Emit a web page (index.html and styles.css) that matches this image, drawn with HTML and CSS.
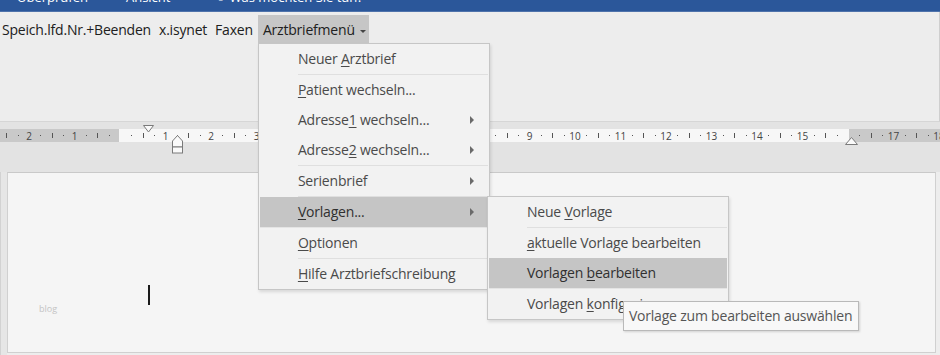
FILE: index.html
```html
<!DOCTYPE html>
<html lang="de">
<head>
    <meta charset="UTF-8">
    <title>Arztbriefmenü</title>
    <link rel="stylesheet" href="styles.css">
</head>
<body>
    <div class="titlebar">
        <div class="tabs">
            <span class="tab">Überprüfen</span>
            <span class="tab">Ansicht</span>
            <span class="tab tell"><span class="bulb">&#9675;</span>Was möchten Sie tun?</span>
        </div>
    </div>

    <div class="ribbon">
        <div class="menubar">
            <span class="menubtn">Speich.lfd.Nr.+Beenden</span>
            <span class="menubtn">x.isynet</span>
            <span class="menubtn">Faxen</span>
            <div class="menubtn open">Arztbriefmenü<span class="caret"></span>
                <ul class="dropdown">
                    <li class="item sep">Neuer <u>A</u>rztbrief</li>
                    <li class="item"><u>P</u>atient wechseln...</li>
                    <li class="item sub">Adresse<u>1</u> wechseln...</li>
                    <li class="item sub sep">Adresse<u>2</u> wechseln...</li>
                    <li class="item sub sep">Serienbrief</li>
                    <li class="item sub active sep"><u>V</u>orlagen...
                        <ul class="dropdown submenu">
                            <li class="item sep">Neue <u>V</u>orlage</li>
                            <li class="item"><u>a</u>ktuelle Vorlage bearbeiten</li>
                            <li class="item active sep">Vorlagen <u>b</u>earbeiten</li>
                            <li class="item">Vorlagen <u>k</u>onfigurieren</li>
                            <div class="tooltip">Vorlage zum bearbeiten auswählen</div>
                        </ul>
                    </li>
                    <li class="item sep"><u>O</u>ptionen</li>
                    <li class="item"><u>H</u>ilfe Arztbriefschreibung</li>
                </ul>
            </div>
        </div>
    </div>

    <div class="ruler-area">
        <svg class="ruler" id="ruler" width="940" height="34"></svg>
    </div>

    <div class="workspace">
        <div class="vstrip"></div>
        <div class="page">
            <div class="line">
                <span class="watermark">blog</span>
                <span class="caret-cursor"></span>
            </div>
        </div>
    </div>

    <script>
        const ruler = document.getElementById('ruler');
        const ns = 'http://www.w3.org/2000/svg';
        const cm = 45.5;
        const zero = 120;

        function add(tag, attrs, text) {
            const el = document.createElementNS(ns, tag);
            for (const k in attrs) el.setAttribute(k, attrs[k]);
            if (text) el.textContent = text;
            ruler.appendChild(el);
            return el;
        }

        // Hintergrund des Lineals (Ränder grau)
        add('rect', { x: 0, y: 7, width: 940, height: 13, fill: '#c9c9c9' });
        add('rect', { x: 119, y: 7, width: 730, height: 13, fill: '#f7f7f7' });

        for (let n = -3; n <= 18; n++) {
            const x = zero + n * cm;
            if (n !== 0 && n !== 16) {
                add('text', { x: x, y: 17.5, class: 'num' }, String(Math.abs(n)));
            }
            add('rect', { x: Math.round(x + cm * 0.25), y: 13, width: 1, height: 1, fill: '#555' });
            add('rect', { x: Math.round(x + cm * 0.5), y: 11, width: 1, height: 5, fill: '#555' });
            add('rect', { x: Math.round(x + cm * 0.75), y: 13, width: 1, height: 1, fill: '#555' });
        }

        // Einzugsmarken
        add('polygon', { points: '143.5,3.5 153.5,3.5 148.5,10', fill: '#fafafa', stroke: '#7a7a7a' });
        add('polygon', { points: '172.5,19 177.5,13.5 182.5,19 182.5,25 172.5,25', fill: '#fafafa', stroke: '#7a7a7a' });
        add('rect', { x: 172.5, y: 25, width: 10, height: 6, fill: '#fafafa', stroke: '#7a7a7a' });
        add('polygon', { points: '845.5,22.5 851.5,15.5 857.5,22.5', fill: '#fafafa', stroke: '#7a7a7a' });
    </script>
</body>
</html>
```

FILE: styles.css
```css
body {
    margin: 0;
    width: 940px;
    height: 355px;
    overflow: hidden;
    background-color: #ededed;
    font-family: 'Open Sans', 'Noto Sans', sans-serif;
    font-size: 14px;
    color: #202020;
}
ul {
    list-style: none;
    margin: 0;
    padding: 0;
}
u {
    text-decoration-thickness: 1px;
    text-underline-offset: 2px;
}

/* blaue Titelleiste, oben abgeschnitten */
.titlebar {
    height: 11px;
    background-color: #2b579a;
    border-bottom: 1px solid #4f73ab;
    overflow: hidden;
}
.tabs {
    display: flex;
    margin-top: -11px;
    padding-left: 17px;
    color: #ffffff;
    font-size: 13px;
    line-height: 16px;
}
.tab {
    margin-right: 38px;
}
.tell {
    margin-left: 9px;
}
.bulb {
    font-size: 10px;
    margin-right: 6px;
}

/* Menüband */
.ribbon {
    height: 109px;
    border-bottom: 1px solid #d6d6d6;
    border-right: 1px solid #cfcfcf;
}
.menubar {
    display: flex;
    padding-top: 3px;
    padding-left: 2px;
}
.menubtn {
    height: 29px;
    line-height: 29px;
    margin-right: 8px;
    letter-spacing: -0.2px;
    position: relative;
}
.menubtn.open {
    background-color: #c6c6c6;
    margin-left: -3px;
    padding: 0 3px 0 5px;
}
.caret {
    display: inline-block;
    margin-left: 5px;
    vertical-align: middle;
    border-left: 3px solid transparent;
    border-right: 3px solid transparent;
    border-top: 3px solid #444;
}

/* Dropdown */
.dropdown {
    position: absolute;
    top: 28px;
    left: 0;
    width: 228px;
    padding: 0 1px;
    background-color: #f2f2f2;
    border: 1px solid #c6c6c6;
    box-shadow: 1px 2px 3px rgba(0, 0, 0, 0.12);
    color: #4a4a4a;
    letter-spacing: -0.2px;
    z-index: 5;
}
.item {
    height: 30px;
    line-height: 30px;
    padding-left: 38px;
    position: relative;
}
.item.sep {
    background: linear-gradient(#dfdfdf, #dfdfdf) no-repeat 38px 100% / calc(100% - 38px) 1px;
    height: 31px;
    line-height: 30px;
}
.item.sub::after {
    content: "";
    position: absolute;
    right: 14px;
    top: 11px;
    border-top: 4px solid transparent;
    border-bottom: 4px solid transparent;
    border-left: 4px solid #6a6a6a;
}
.item.active {
    background: #c5c5c5;
    color: #303030;
}
.item.active.sep {
    height: 30px;
    border-bottom: 1px solid #e4e4e4;
}
.submenu {
    top: -1px;
    left: calc(100% - 1px);
    width: 238px;
}

/* Tooltip */
.tooltip {
    position: absolute;
    left: 135px;
    top: 104px;
    height: 28px;
    line-height: 28px;
    padding: 0 6px 0 5px;
    background-color: #f8f8f8;
    border: 1px solid #b9b9b9;
    box-shadow: 1px 1px 2px rgba(0, 0, 0, 0.15);
    color: #555;
    white-space: nowrap;
}

/* Lineal */
.ruler-area {
    height: 50px;
    background-color: #e3e3e3;
}
.ruler {
    display: block;
}
.ruler .num {
    font-family: 'Open Sans', sans-serif;
    font-size: 10px;
    fill: #444;
    text-anchor: middle;
}

/* Dokumentbereich */
.workspace {
    display: flex;
    height: 183px;
}
.vstrip {
    width: 6px;
    border-left: 1px solid #d2d2d2;
    background-color: #e6e6e6;
}
.page {
    width: 927px;
    height: 179px;
    background-color: #f5f5f5;
    border: 1px solid #d0d0d0;
    border-top-color: #c9c9c9;
}
.line {
    display: flex;
    padding-top: 112px;
    padding-left: 31px;
}
.watermark {
    width: 109px;
    margin-top: 18px;
    font-size: 9px;
    line-height: 12px;
    color: #c4c4c4;
}
.caret-cursor {
    width: 2px;
    height: 20px;
    background-color: #1a1a1a;
}
```
